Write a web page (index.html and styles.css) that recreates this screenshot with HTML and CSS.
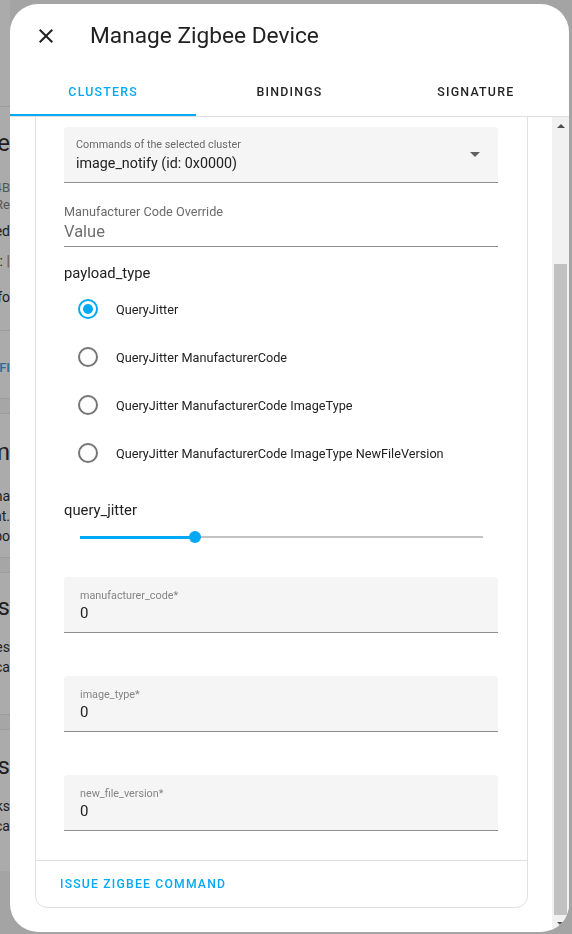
FILE: index.html
```html
<!DOCTYPE html>
<html lang="en">
<head>
<meta charset="utf-8">
<title>Manage Zigbee Device</title>
<link rel="stylesheet" href="styles.css">
</head>
<body>
<div class="page">
  <div class="bg-top"></div>
  <div class="bg-card c1">
    <div class="bl big m20">Device</div>
    <div class="bl sm m20">E3-4B</div>
    <div class="bl sm">by Re</div>
    <div class="bl md m8">Connected</div>
    <div class="bl md m10">Type:&nbsp;<span class="brown">|</span></div>
    <div class="bl md m16">Info</div>
    <div class="bl-div m23"></div>
    <div class="bl link m27">FI</div>
  </div>
  <div class="bg-gap"></div>
  <div class="bg-card c2">
    <div class="bl big m22">Zigbeem</div>
    <div class="bl md m18">a na</div>
    <div class="bl md">ment.</div>
    <div class="bl md">abo</div>
  </div>
  <div class="bg-gap"></div>
  <div class="bg-card c3">
    <div class="bl big m18">Groupes</div>
    <div class="bl md m14">des</div>
    <div class="bl md">loca</div>
  </div>
  <div class="bg-gap"></div>
  <div class="bg-card c4">
    <div class="bl big m20">Exports</div>
    <div class="bl md m14">ks</div>
    <div class="bl md">loca</div>
  </div>
</div>

<div class="dialog">
  <header class="dlg-head">
    <span class="close-btn">
      <svg viewBox="0 0 24 24" width="24" height="24"><path d="M19,6.41L17.59,5L12,10.59L6.41,5L5,6.41L10.59,12L5,17.59L6.41,19L12,13.41L17.59,19L19,17.59L13.41,12L19,6.41Z"/></svg>
    </span>
    <h2 class="title">Manage Zigbee Device</h2>
  </header>
  <nav class="tabs">
    <div class="tab active">Clusters</div>
    <div class="tab">Bindings</div>
    <div class="tab">Signature</div>
  </nav>
  <div class="content-wrap">
    <div class="content">
      <div class="inner">
        <div class="card">
          <div class="card-body">
            <div class="select">
              <div class="sel-text">
                <div class="sel-label">Commands of the selected cluster</div>
                <div class="sel-value">image_notify (id: 0x0000)</div>
              </div>
              <span class="arrow"></span>
            </div>

            <div class="tf">
              <div class="tf-label">Manufacturer Code Override</div>
              <div class="tf-value">Value</div>
            </div>

            <div class="group-label">payload_type</div>
            <div class="radios">
              <div class="radio-row"><span class="radio checked"></span><span class="radio-label">QueryJitter</span></div>
              <div class="radio-row"><span class="radio"></span><span class="radio-label">QueryJitter ManufacturerCode</span></div>
              <div class="radio-row"><span class="radio"></span><span class="radio-label">QueryJitter ManufacturerCode ImageType</span></div>
              <div class="radio-row"><span class="radio"></span><span class="radio-label">QueryJitter ManufacturerCode ImageType NewFileVersion</span></div>
            </div>

            <div class="group-label slider-label">query_jitter</div>
            <div class="slider">
              <div class="track">
                <div class="fill" style="width:28.5%"></div>
                <div class="thumb"></div>
              </div>
            </div>

            <div class="ff">
              <div class="ff-label">manufacturer_code*</div>
              <div class="ff-value">0</div>
            </div>
            <div class="ff">
              <div class="ff-label">image_type*</div>
              <div class="ff-value">0</div>
            </div>
            <div class="ff">
              <div class="ff-label">new_file_version*</div>
              <div class="ff-value">0</div>
            </div>
          </div>
          <div class="card-actions">
            <span class="action-btn">Issue Zigbee Command</span>
          </div>
        </div>
      </div>
    </div>
    <div class="scrollbar" aria-hidden="true">
      <div class="sb-btn"><span class="sb-up"></span></div>
      <div class="sb-track"><div class="sb-thumb"></div></div>
      <div class="sb-btn"><span class="sb-down"></span></div>
    </div>
  </div>
</div>
</body>
</html>
```

FILE: styles.css
```css
* { box-sizing: border-box; }

body {
  margin: 0;
  width: 572px;
  height: 934px;
  overflow: hidden;
  background: #a4a4a4;
  font-family: Roboto, "Noto Sans", sans-serif;
}

/* ---------- dimmed page behind the dialog ---------- */
.page {
  width: 10px;
  overflow: hidden;
  display: flex;
  flex-direction: column;
}
.bg-top {
  height: 107px;
  background: #ababab;
  border-bottom: 1px solid #9c9c9c;
}
.bg-card {
  background: #ababab;
  display: flex;
  flex-direction: column;
}
.c1 { height: 291px; }
.c2 { height: 143px; }
.c3 { height: 141px; }
.c4 { height: 141px; }
.bg-gap {
  height: 16px;
  background: #a6a6a6;
  border-top: 1px solid #9c9c9c;
  border-bottom: 1px solid #9c9c9c;
}
.bl {
  display: flex;
  justify-content: flex-end;
  white-space: nowrap;
  color: #1e1e1e;
}
.bl.big { font-size: 24px; line-height: 32px; }
.bl.sm { font-size: 13px; line-height: 17px; color: #555; }
.bl.md { font-size: 14px; line-height: 20px; }
.bl.link { font-size: 13px; line-height: 20px; font-weight: 500; color: #2a6b98; }
.bl-div { height: 1px; background: #9c9c9c; }
.brown { color: #7a5a2a; font-weight: 700; }
.m8 { margin-top: 8px; }
.m10 { margin-top: 10px; }
.m14 { margin-top: 14px; }
.m16 { margin-top: 16px; }
.m18 { margin-top: 18px; }
.m20 { margin-top: 20px; }
.m22 { margin-top: 22px; }
.m23 { margin-top: 23px; }
.m27 { margin-top: 27px; }

/* ---------- dialog ---------- */
.dialog {
  position: fixed;
  left: 10px;
  top: 4px;
  width: 559px;
  height: 928px;
  background: #fff;
  border-radius: 28px;
  overflow: hidden;
  display: flex;
  flex-direction: column;
}
.dlg-head {
  height: 64px;
  flex: none;
  display: flex;
  align-items: center;
  padding-left: 24px;
}
.close-btn {
  width: 24px;
  height: 24px;
  display: flex;
}
.close-btn svg { fill: #212121; }
.title {
  margin: 0 0 0 32px;
  font-size: 22.7px;
  line-height: 28px;
  font-weight: 400;
  color: #212121;
}

.tabs {
  flex: none;
  height: 49px;
  display: flex;
  border-bottom: 1px solid #e0e0e0;
}
.tab {
  flex: 1;
  display: flex;
  align-items: center;
  justify-content: center;
  padding-bottom: 1px;
  font-size: 12.4px;
  font-weight: 500;
  letter-spacing: 1.2px;
  text-transform: uppercase;
  color: rgba(0, 0, 0, 0.87);
}
.tab.active {
  color: #03a9f4;
  box-shadow: inset 0 -2px 0 #03a9f4;
}

.content-wrap {
  flex: 1;
  min-height: 0;
  display: flex;
}
.content {
  flex: 1;
  overflow: hidden;
  display: flex;
  flex-direction: column-reverse;
}

/* drawn scrollbar */
.scrollbar {
  width: 17px;
  flex: none;
  background: #f1f1f1;
  display: flex;
  flex-direction: column;
}
.sb-btn {
  height: 17px;
  flex: none;
  display: flex;
  align-items: center;
  justify-content: center;
}
.sb-up {
  width: 0;
  height: 0;
  border-left: 4px solid transparent;
  border-right: 4px solid transparent;
  border-bottom: 4px solid #505050;
}
.sb-down {
  width: 0;
  height: 0;
  border-left: 4px solid transparent;
  border-right: 4px solid transparent;
  border-top: 4px solid #505050;
}
.sb-track {
  flex: 1;
  display: flex;
  flex-direction: column;
  padding: 130px 2px 0;
}
.sb-thumb {
  flex: 1;
  background: #c1c1c1;
}

.inner {
  flex: none;
  padding: 16px 24px 24px 25px;
}
.card {
  border: 1px solid #e0e0e0;
  border-radius: 12px;
}
.card-body {
  padding: 24px 29px 29px 28px;
}

.select {
  height: 56px;
  background: #f5f5f5;
  border-radius: 4px 4px 0 0;
  border-bottom: 1px solid #8e8e8e;
  display: flex;
  align-items: center;
  padding: 0 18px 0 12px;
}
.sel-text { flex: 1; }
.sel-label {
  font-size: 10.8px;
  line-height: 16px;
  color: #6b6b6b;
}
.sel-value {
  font-size: 14.3px;
  line-height: 20px;
  color: #212121;
}
.arrow {
  width: 0;
  height: 0;
  border-left: 5px solid transparent;
  border-right: 5px solid transparent;
  border-top: 5px solid #616161;
}

.tf {
  margin-top: 21px;
  padding-bottom: 2px;
  border-bottom: 1px solid #8e8e8e;
}
.tf-label {
  font-size: 12.7px;
  line-height: 16px;
  color: #6b6b6b;
}
.tf-value {
  font-size: 16.5px;
  line-height: 24px;
  color: #707070;
}

.group-label {
  margin-top: 16px;
  font-size: 14.8px;
  line-height: 20px;
  color: #212121;
}
.radios { margin-top: 2px; }
.radio-row {
  height: 48px;
  display: flex;
  align-items: center;
  padding-left: 14px;
}
.radio {
  width: 20px;
  height: 20px;
  border: 2px solid #757575;
  border-radius: 50%;
  margin-right: 18px;
  display: flex;
  align-items: center;
  justify-content: center;
}
.radio.checked { border-color: #03a9f4; }
.radio.checked::after {
  content: "";
  width: 10px;
  height: 10px;
  border-radius: 50%;
  background: #03a9f4;
}
.radio-label {
  font-size: 12.7px;
  color: #212121;
}

.slider-label { margin-top: 23px; }
.slider {
  height: 34px;
  margin: 0 15px 0 16px;
  display: flex;
  align-items: center;
}
.track {
  flex: 1;
  height: 2px;
  background: #c2c2c2;
  display: flex;
  align-items: center;
}
.fill {
  height: 3px;
  background: #03a9f4;
}
.thumb {
  width: 12px;
  height: 12px;
  flex: none;
  margin-left: -6px;
  border-radius: 50%;
  background: #03a9f4;
}

.ff {
  margin-top: 23px;
  background: #f5f5f5;
  border-radius: 4px 4px 0 0;
  border-bottom: 1px solid #8e8e8e;
  padding: 12px 16px 9px;
}
.ff + .ff { margin-top: 43px; }
.ff-label {
  font-size: 10.8px;
  line-height: 14px;
  color: #858585;
}
.ff-value {
  font-size: 15px;
  line-height: 20px;
  color: #212121;
}

.card-actions {
  height: 47px;
  border-top: 1px solid #e0e0e0;
  display: flex;
  align-items: center;
  padding: 0 8px;
}
.action-btn {
  padding: 0 16px;
  font-size: 12.2px;
  font-weight: 500;
  letter-spacing: 1.2px;
  text-transform: uppercase;
  color: #03a9f4;
}
```
